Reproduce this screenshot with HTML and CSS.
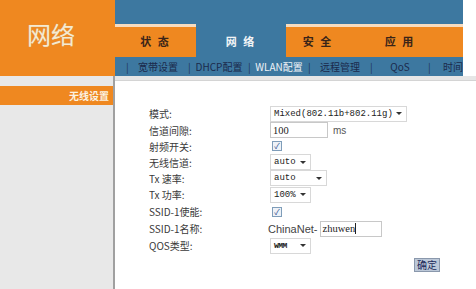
FILE: index.html
```html
<!DOCTYPE html>
<html lang="zh-CN">

<head>
    <meta charset="UTF-8">
    <meta name="viewport" content="width=device-width, initial-scale=1.0">
    <title>网络 - 无线设置</title>
    <link rel="stylesheet" href="styles.css">
</head>

<body>
    <div class="header">
        <div class="logo">网络</div>
        <div class="nav">
            <div class="topbar"></div>
            <div class="tabs">
                <div class="tab" style="width:81px">状 态</div>
                <div class="tab active" style="width:90px">网 络</div>
                <div class="tab" style="width:64px">安 全</div>
                <div class="tab" style="width:100px">应 用</div>
                <div class="tab fill"></div>
            </div>
            <div class="subnav">
                <span class="sep first">|</span>
                <span class="item" style="width:60px">宽带设置</span>
                <span class="sep">|</span>
                <span class="item" style="width:58px">DHCP配置</span>
                <span class="sep">|</span>
                <span class="item current" style="width:58px">WLAN配置</span>
                <span class="sep">|</span>
                <span class="item" style="width:60px">远程管理</span>
                <span class="sep">|</span>
                <span class="item" style="width:56px">QoS</span>
                <span class="sep">|</span>
                <span class="item last">时间</span>
            </div>
        </div>
    </div>

    <div class="main">
        <div class="sidebar">
            <div class="side-title">无线设置</div>
        </div>
        <div class="content">
            <div class="form">
                <label>模式:</label>
                <div class="field">
                    <div class="select wide"><span>Mixed(802.11b+802.11g)</span><i class="arrow"></i></div>
                </div>

                <label>信道间隙:</label>
                <div class="field">
                    <div class="input short">100</div>
                    <span class="unit">ms</span>
                </div>

                <label>射频开关:</label>
                <div class="field"><div class="check">✓</div></div>

                <label>无线信道:</label>
                <div class="field">
                    <div class="select small"><span>auto</span><i class="arrow"></i></div>
                </div>

                <label>Tx 速率:</label>
                <div class="field">
                    <div class="select mid"><span>auto</span><i class="arrow"></i></div>
                </div>

                <label>Tx 功率:</label>
                <div class="field">
                    <div class="select small"><span>100%</span><i class="arrow"></i></div>
                </div>

                <label>SSID-1使能:</label>
                <div class="field"><div class="check">✓</div></div>

                <label>SSID-1名称:</label>
                <div class="field">
                    <span class="prefix">ChinaNet-</span>
                    <div class="input name">zhuwen<b class="caret"></b></div>
                </div>

                <label>QOS类型:</label>
                <div class="field">
                    <div class="select small"><span class="wmm">WMM</span><i class="arrow"></i></div>
                </div>
            </div>
            <div class="actions">
                <button class="ok">确定</button>
            </div>
        </div>
    </div>
</body>
</html>
```

FILE: styles.css
```css
* {
    margin: 0;
    padding: 0;
    box-sizing: border-box;
}

body {
    width: 476px;
    height: 289px;
    overflow: hidden;
    background: #fff;
    font-family: "Noto Sans CJK SC", "Liberation Sans", sans-serif;
    font-size: 10px;
    color: #333;
}

/* ---------- header ---------- */
.header {
    display: flex;
    height: 76px;
}

.logo {
    width: 115px;
    background: #ef8820;
    color: #f6ead0;
    font-size: 24px;
    line-height: 24px;
    padding: 22px 0 0 27px;
    text-shadow: 0 0 1px #c9a070;
}

.nav {
    width: 348px;
    display: flex;
    flex-direction: column;
}

.topbar {
    height: 24px;
    background: #3d78a0;
}

.tabs {
    height: 33px;
    display: flex;
}

.tab {
    background: #ef8820;
    border-top: 3px solid #f6dcc0;
    display: flex;
    justify-content: center;
    align-items: center;
    padding-bottom: 2px;
    font-weight: bold;
    font-size: 11px;
    letter-spacing: 2px;
    color: #3a2418;
}

.tab.fill {
    flex: 1;
}

.tab.active {
    background: #3d78a0;
    border-top: 3px solid #3d78a0;
    color: #f2f4f6;
}

.subnav {
    height: 19px;
    background: #3d78a0;
    display: flex;
    align-items: center;
    overflow: hidden;
    white-space: nowrap;
    font-size: 10px;
    color: #1b2a4c;
}

.sep {
    width: 2px;
    text-align: center;
    color: #24365a;
}

.sep.first {
    margin-left: 11px;
}

.item {
    text-align: center;
    flex-shrink: 0;
}

.item.current {
    color: #eef2f6;
}

.item.last {
    padding-left: 13px;
}

/* ---------- main ---------- */
.main {
    display: flex;
    height: 213px;
    background: #e6e6e6;
}

.sidebar {
    width: 115px;
    padding-top: 10px;
    background: #e8e8e8;
    border-right: 2px solid #a0a0a0;
}

.side-title {
    height: 19px;
    background: #ef8820;
    color: #fbf2e2;
    font-weight: bold;
    font-size: 10px;
    text-align: right;
    padding-right: 4px;
    line-height: 19px;
}

.content {
    flex: 1;
    margin-top: 4px;
    background: #fff;
    border-top: 1px solid #d4d4d4;
    padding: 24px 0 0 34px;
}

.form {
    display: grid;
    grid-template-columns: 121px auto;
    grid-template-rows: 17px 16px 16px 16px 16px 17px 17px 17px 17px;
    align-items: center;
}

.form label {
    color: #3a3a3a;
    font-size: 10px;
}

.field {
    display: flex;
    align-items: center;
}

.select {
    height: 16px;
    border: 1px solid #d8d8d8;
    display: flex;
    align-items: center;
    justify-content: space-between;
    padding: 0 4px 0 3px;
    font-family: "Liberation Mono", monospace;
    font-size: 9px;
    color: #222;
}

.select.wide {
    width: 137px;
}

.select.small {
    width: 41px;
}

.select.mid {
    width: 57px;
}

.arrow {
    width: 0;
    height: 0;
    border-left: 3px solid transparent;
    border-right: 3px solid transparent;
    border-top: 3px solid #333;
}

.wmm {
    font-weight: bold;
    font-size: 8px;
    letter-spacing: -0.5px;
}

.input {
    height: 16px;
    border: 1px solid #c8c8c8;
    padding-left: 2px;
    display: flex;
    align-items: center;
    font-family: "Liberation Serif", serif;
    font-size: 10.5px;
    color: #222;
}

.input.short {
    width: 58px;
}

.input.name {
    width: 62px;
    margin-left: 2px;
}

.caret {
    width: 1px;
    height: 11px;
    background: #222;
}

.unit {
    margin-left: 5px;
    color: #555;
    font-family: "Liberation Sans", sans-serif;
    font-size: 10px;
}

.prefix {
    margin-left: -2px;
    font-family: "Liberation Sans", sans-serif;
    font-size: 11px;
    color: #444;
}

.check {
    width: 10px;
    height: 10px;
    margin-left: 2px;
    border: 1px solid #7f9db9;
    background: #eef2f8;
    color: #2a4a8a;
    font-size: 8px;
    line-height: 8px;
    text-align: center;
}

.actions {
    display: flex;
    justify-content: flex-end;
    padding: 4px 36px 0 0;
}

.ok {
    width: 26px;
    height: 14px;
    border: 1px solid #8a98ac;
    background: #bcc8d8;
    font-family: "Noto Sans CJK SC", sans-serif;
    font-size: 10px;
    line-height: 12px;
    color: #1a2a5a;
}
```
